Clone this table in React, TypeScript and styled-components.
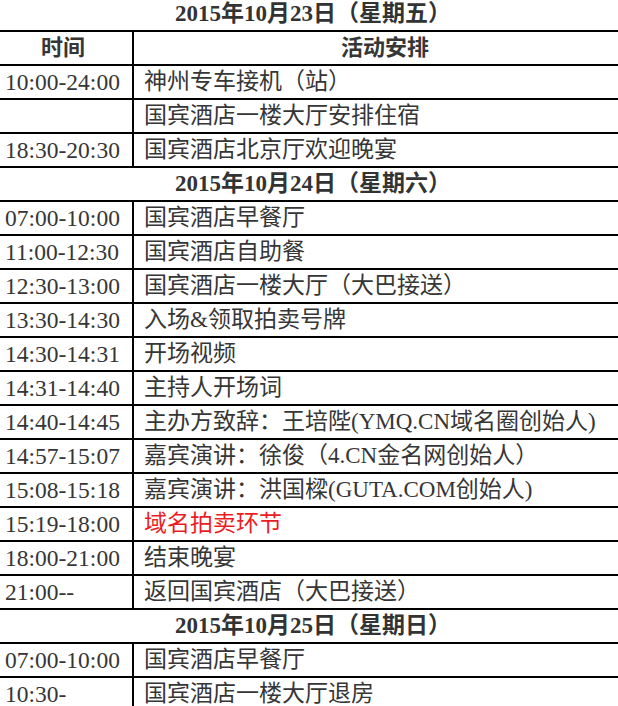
import React from 'react';
import styled, { createGlobalStyle } from 'styled-components';

const GlobalStyle = createGlobalStyle`
  html, body {
    margin: 0;
    padding: 0;
    background: #ffffff;
    overflow: hidden;
  }
`;

const Page = styled.div`
  width: 626px;
  margin-top: -2px;
  font-family: "Liberation Serif", "Noto Sans CJK SC", serif;
  color: #363636;
`;

const Table = styled.table`
  width: 626px;
  table-layout: fixed;
  border-collapse: separate;
  border-spacing: 0;
`;

const Col = styled.col<{ $w?: number }>`
  width: ${p => (p.$w ? `${p.$w}px` : 'auto')};
`;

const DayCell = styled.td`
  height: 32px;
  padding: 0;
  border-bottom: 2px solid #000;
  text-align: center;
  font-size: 23px;
  font-weight: bold;
  line-height: 32px;
  color: #333;
`;

const TimeCell = styled.td<{ $head?: boolean }>`
  height: 32px;
  padding: ${p => (p.$head ? '0 6px 0 0' : '0 0 0 5px')};
  border-bottom: 2px solid #000;
  border-right: 2px solid #000;
  font-size: ${p => (p.$head ? '22px' : '23.5px')};
  font-weight: ${p => (p.$head ? 'bold' : 'normal')};
  text-align: ${p => (p.$head ? 'center' : 'left')};
  line-height: 32px;
  white-space: nowrap;
`;

const ItemCell = styled.td<{ $head?: boolean; $hot?: boolean }>`
  height: 32px;
  padding: 0 0 0 10px;
  border-bottom: 2px solid #000;
  font-size: ${p => (p.$head ? '22px' : '23px')};
  font-weight: ${p => (p.$head ? 'bold' : 'normal')};
  text-align: ${p => (p.$head ? 'center' : 'left')};
  color: ${p => (p.$hot ? '#ec1c24' : 'inherit')};
  line-height: 32px;
  white-space: nowrap;
`;

type Row = { t: string; a: string; hot?: boolean };
type Day = { title: string; rows: Row[] };

const days: Day[] = [
  {
    title: '2015年10月23日（星期五）',
    rows: [
      { t: '10:00-24:00', a: '神州专车接机（站）' },
      { t: '', a: '国宾酒店一楼大厅安排住宿' },
      { t: '18:30-20:30', a: '国宾酒店北京厅欢迎晚宴' },
    ],
  },
  {
    title: '2015年10月24日（星期六）',
    rows: [
      { t: '07:00-10:00', a: '国宾酒店早餐厅' },
      { t: '11:00-12:30', a: '国宾酒店自助餐' },
      { t: '12:30-13:00', a: '国宾酒店一楼大厅（大巴接送）' },
      { t: '13:30-14:30', a: '入场&领取拍卖号牌' },
      { t: '14:30-14:31', a: '开场视频' },
      { t: '14:31-14:40', a: '主持人开场词' },
      { t: '14:40-14:45', a: '主办方致辞：王培陛(YMQ.CN域名圈创始人)' },
      { t: '14:57-15:07', a: '嘉宾演讲：徐俊（4.CN金名网创始人）' },
      { t: '15:08-15:18', a: '嘉宾演讲：洪国樑(GUTA.COM创始人)' },
      { t: '15:19-18:00', a: '域名拍卖环节', hot: true },
      { t: '18:00-21:00', a: '结束晚宴' },
      { t: '21:00--', a: '返回国宾酒店（大巴接送）' },
    ],
  },
  {
    title: '2015年10月25日（星期日）',
    rows: [
      { t: '07:00-10:00', a: '国宾酒店早餐厅' },
      { t: '10:30-', a: '国宾酒店一楼大厅退房' },
    ],
  },
];

export default function App() {
  return (
    <Page>
      <GlobalStyle />
      <Table>
        <colgroup>
          <Col $w={134} />
          <Col />
        </colgroup>
        <tbody>
          {days.map((day, i) => (
            <React.Fragment key={day.title}>
              <tr>
                <DayCell colSpan={2}>{day.title}</DayCell>
              </tr>
              {i === 0 && (
                <tr>
                  <TimeCell $head>时间</TimeCell>
                  <ItemCell $head>活动安排</ItemCell>
                </tr>
              )}
              {day.rows.map((r, j) => (
                <tr key={j}>
                  <TimeCell>{r.t}</TimeCell>
                  <ItemCell $hot={r.hot}>{r.a}</ItemCell>
                </tr>
              ))}
            </React.Fragment>
          ))}
        </tbody>
      </Table>
    </Page>
  );
}
